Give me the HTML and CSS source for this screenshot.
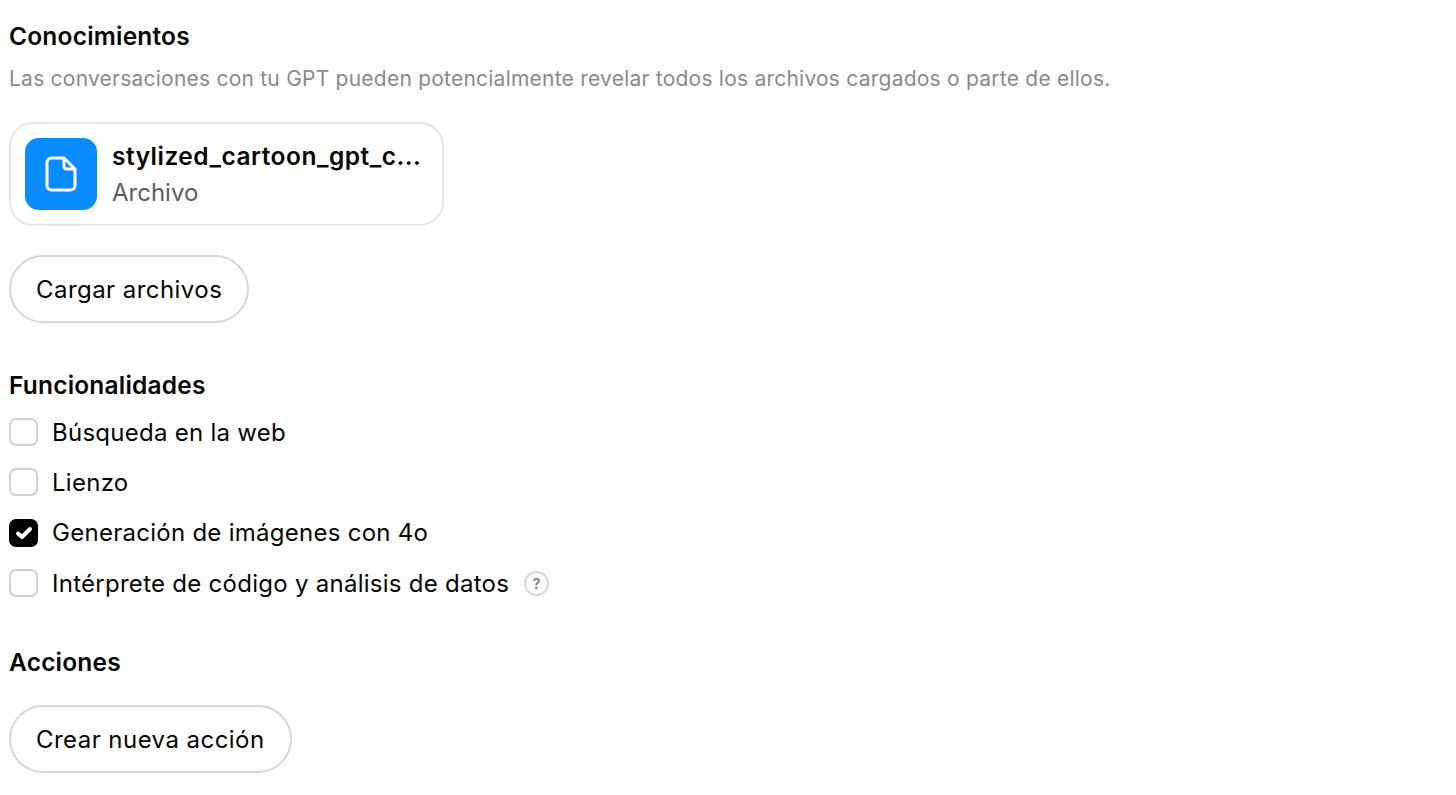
FILE: index.html
```html
<html>
    <head>
        <title>Configurar GPT</title>
        <link rel="stylesheet" href="styles.css">
    </head>
    <body>
        <h2 class="heading first">Conocimientos</h2>
        <p class="hint">Las conversaciones con tu GPT pueden potencialmente revelar todos los archivos cargados o parte de ellos.</p>
        <div class="file">
            <div class="fileicon">
                <svg width="36" height="38" viewBox="0 0 36 38" fill="none">
                    <path d="M21 3H8.5A4.5 4.5 0 0 0 4 7.500V30.500A4.500 4.500 0 0 0 8.500 35H27.500A4.500 4.500 0 0 0 32 30.500V14Z" stroke="#fff" stroke-width="3" stroke-linejoin="round"/>
                    <path d="M21 3V11.500A2.500 2.500 0 0 0 23.500 14H32" stroke="#fff" stroke-width="3" stroke-linejoin="round"/>
                </svg>
            </div>
            <div class="fileinfo">
                <div class="filename">stylized_cartoon_gpt_c...</div>
                <div class="filetype">Archivo</div>
            </div>
        </div>
        <button class="btn">Cargar archivos</button>

        <h2 class="heading second">Funcionalidades</h2>
        <div class="options">
            <label class="option"><span class="box"></span>Búsqueda en la web</label>
            <label class="option"><span class="box"></span>Lienzo</label>
            <label class="option">
                <span class="box checked">
                    <svg width="18" height="14" viewBox="0 0 18 14" fill="none"><path d="M3 7.500L7 11L15 3" stroke="#fff" stroke-width="4" stroke-linecap="round" stroke-linejoin="round"/></svg>
                </span>
                Generación de imágenes con 4o
            </label>
            <label class="option"><span class="box"></span>Intérprete de código y análisis de datos<span class="help">?</span></label>
        </div>

        <h2 class="heading third">Acciones</h2>
        <button class="btn last">Crear nueva acción</button>
    </body>
</html>
```

FILE: styles.css
```css
body{
    margin: 0;
    padding: 0 9px;
    background-color: white;
    color: #050505;
    font-family: Inter, "Noto Sans", sans-serif;
}
.heading{
    margin: 0;
    font-size: 24.500px;
    font-weight: 600;
    letter-spacing: 0.2px;
    line-height: 30px;
}
.first{
    padding-top: 21px;
}
.second{
    margin-top: 47px;
}
.third{
    margin-top: 50px;
}
.hint{
    margin: 14px 0 0 0;
    color: #8a8a8a;
    font-size: 21px;
    letter-spacing: 0.23px;
    line-height: 28px;
}
.file{
    display: flex;
    align-items: center;
    gap: 15px;
    box-sizing: border-box;
    width: 435px;
    height: 104px;
    margin-top: 29px;
    padding: 0 14px;
    border: 2px solid #e5e5e5;
    border-radius: 24px;
}
.fileicon{
    display: flex;
    align-items: center;
    justify-content: center;
    width: 72px;
    height: 72px;
    flex-shrink: 0;
    border-radius: 14px;
    background-color: #0a8cff;
}
.filename{
    font-size: 24.500px;
    font-weight: 600;
    letter-spacing: 0.5px;
    line-height: 36px;
}
.filetype{
    margin-top: 1px;
    color: #5d5d5d;
    font-size: 24px;
    line-height: 36px;
}
.btn{
    display: block;
    box-sizing: border-box;
    height: 68px;
    margin-top: 29px;
    padding: 0 25px;
    border: 2px solid #d6d6d6;
    border-radius: 34px;
    background-color: white;
    color: #050505;
    font-family: Inter, "Noto Sans", sans-serif;
    font-size: 24px;
    letter-spacing: 0.45px;
}
.last{
    margin-top: 28px;
}
.options{
    display: flex;
    flex-direction: column;
    gap: 22.400px;
    margin-top: 18px;
}
.option{
    display: flex;
    align-items: center;
    height: 28px;
    font-size: 24px;
    letter-spacing: 0.27px;
}
.box{
    display: flex;
    align-items: center;
    justify-content: center;
    box-sizing: border-box;
    width: 29px;
    height: 28px;
    margin-right: 14px;
    border: 2px solid #d0d0d0;
    border-radius: 7px;
}
.checked{
    border-color: black;
    background-color: black;
}
.help{
    display: flex;
    align-items: center;
    justify-content: center;
    box-sizing: border-box;
    width: 25px;
    height: 25px;
    margin-left: 15px;
    border: 2px solid #d6d6d6;
    border-radius: 50%;
    color: #7a7a7a;
    font-size: 14px;
    font-weight: 600;
}
```
